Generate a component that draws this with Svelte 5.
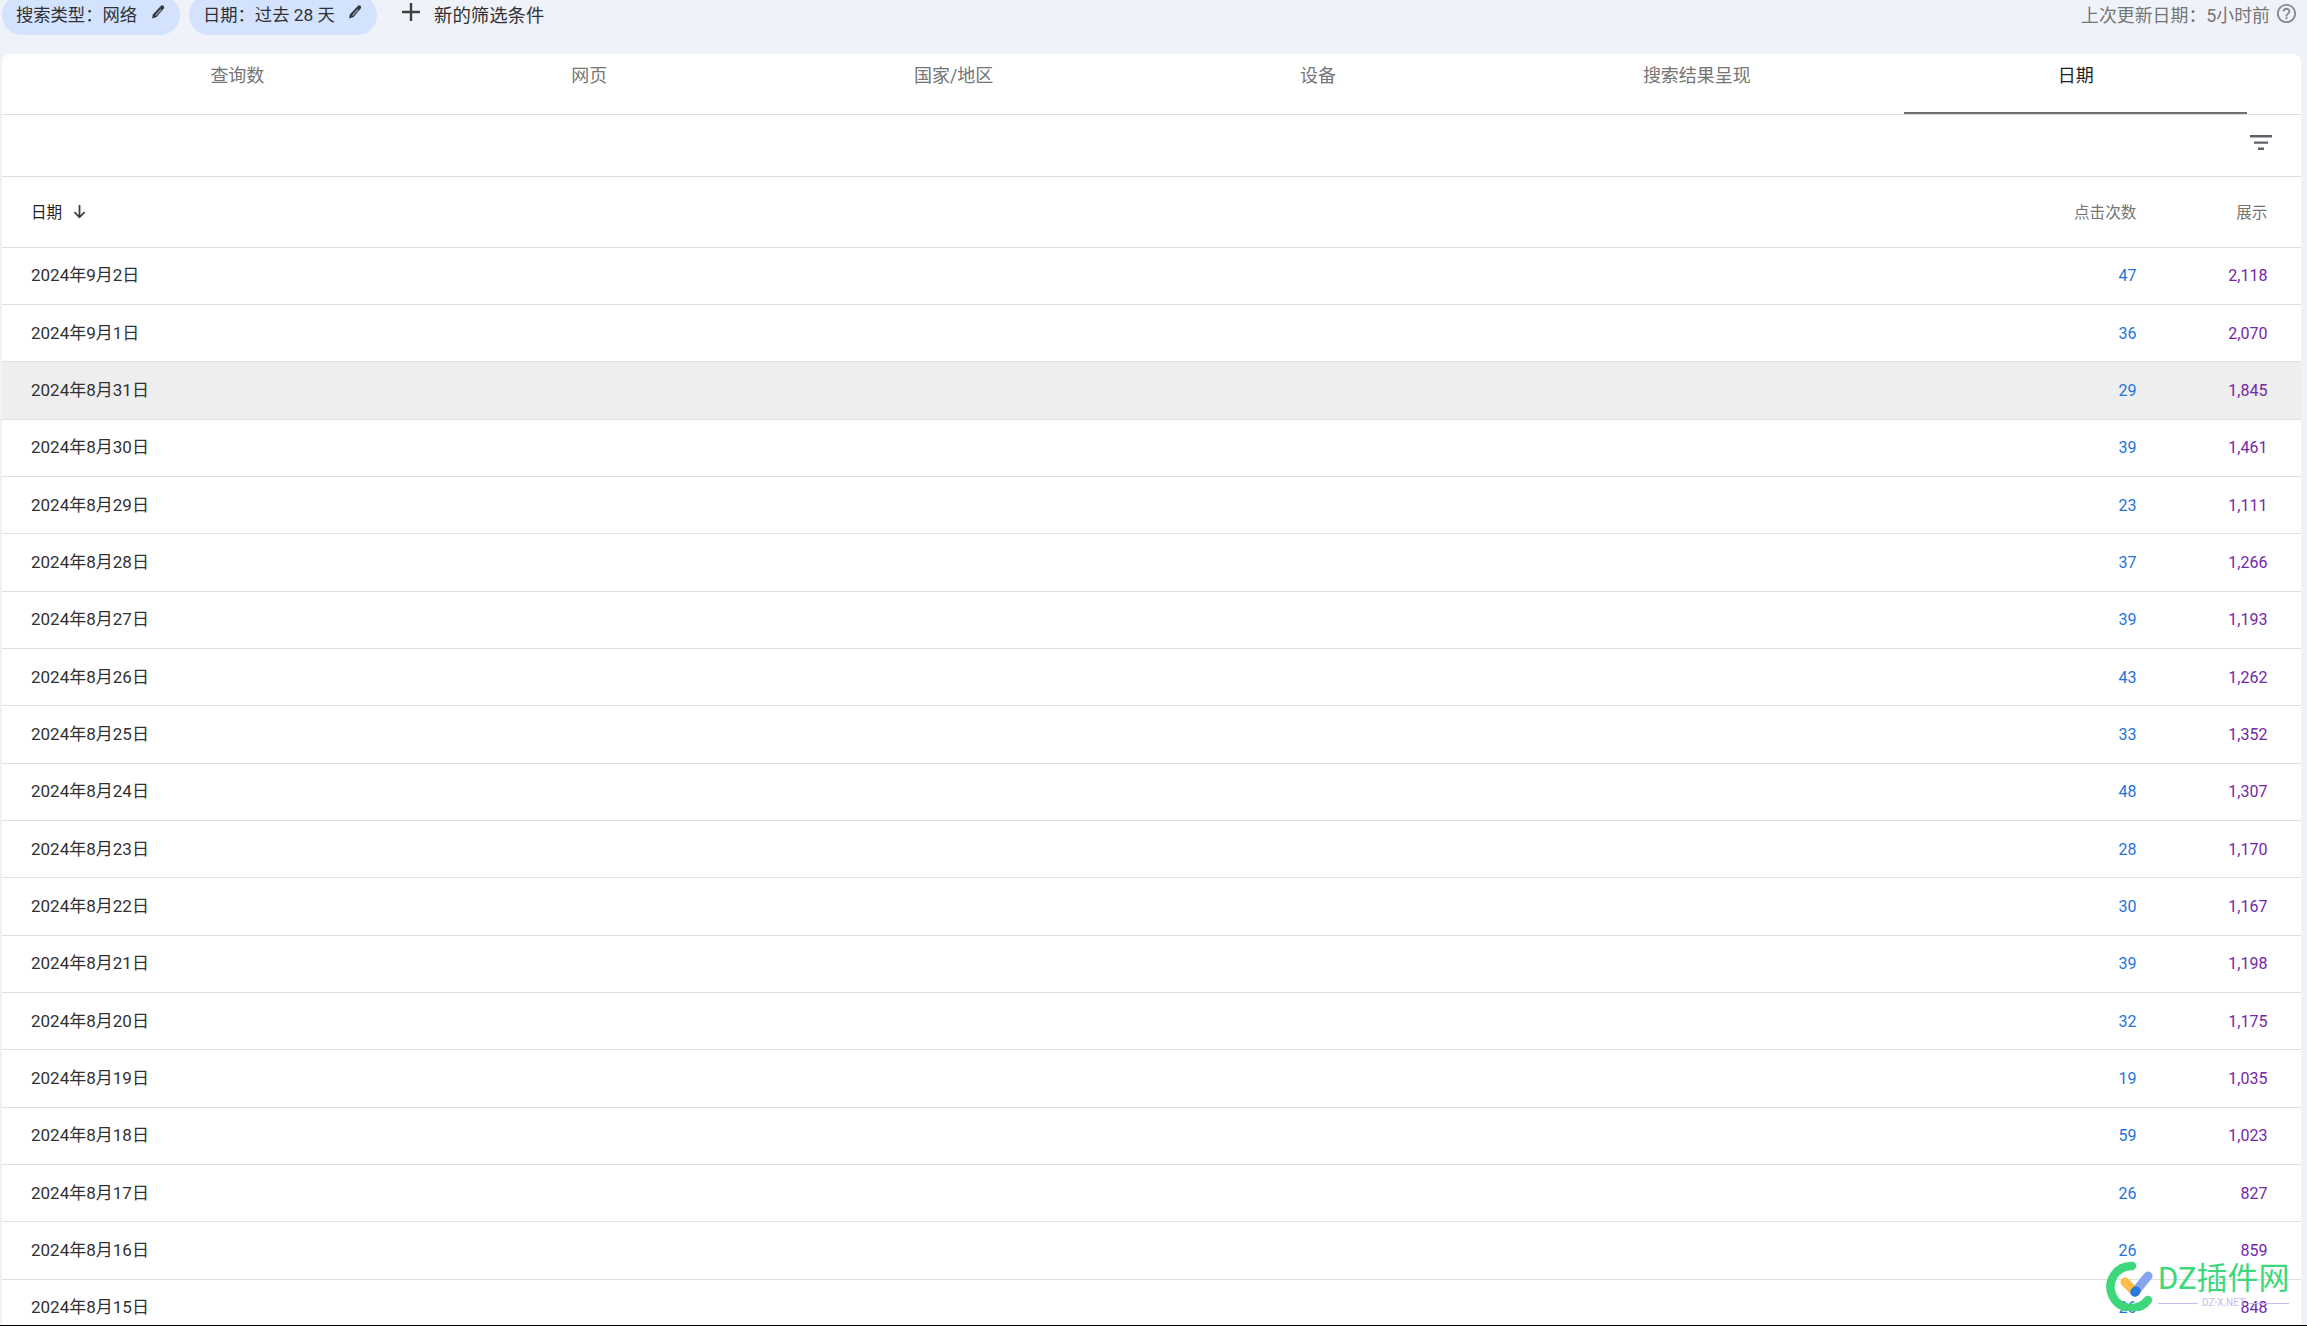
<script lang="ts">
  const tabs = ['查询数', '网页', '国家/地区', '设备', '搜索结果呈现', '日期'];
  const rows = [
    ['2024年9月2日', '47', '2,118'],
    ['2024年9月1日', '36', '2,070'],
    ['2024年8月31日', '29', '1,845'],
    ['2024年8月30日', '39', '1,461'],
    ['2024年8月29日', '23', '1,111'],
    ['2024年8月28日', '37', '1,266'],
    ['2024年8月27日', '39', '1,193'],
    ['2024年8月26日', '43', '1,262'],
    ['2024年8月25日', '33', '1,352'],
    ['2024年8月24日', '48', '1,307'],
    ['2024年8月23日', '28', '1,170'],
    ['2024年8月22日', '30', '1,167'],
    ['2024年8月21日', '39', '1,198'],
    ['2024年8月20日', '32', '1,175'],
    ['2024年8月19日', '19', '1,035'],
    ['2024年8月18日', '59', '1,023'],
    ['2024年8月17日', '26', '827'],
    ['2024年8月16日', '26', '859'],
    ['2024年8月15日', '26', '848'],
  ];
</script>

{#snippet pencil()}
  <svg class="pencil" viewBox="0 0 16 16" width="16" height="16">
    <path d="M10.6 2.2 a2 2 0 0 1 3.2 2.4 L6.6 13 L2.2 14.6 L2.8 10.6 Z" fill="#34373a" />
    <path d="M10.4 5 L11.6 6 L6 12 L5 11.2 Z" fill="#8d97a8" />
  </svg>
{/snippet}

<div class="page">
  <div class="topbar">
    <span class="chip chip-a">搜索类型：网络 {@render pencil()}</span>
    <span class="chip chip-b">日期：过去 28 天 {@render pencil()}</span>
    <span class="add">
      <svg viewBox="0 0 18 18" width="18" height="18"><path d="M7.8 0h2.4v7.8H18v2.4h-7.8V18H7.8v-7.8H0V7.8h7.8z" fill="#3c4043" /></svg>
      新的筛选条件
    </span>
    <span class="updated">
      上次更新日期：5小时前
      <svg viewBox="0 0 24 24" width="23" height="23"><path d="M11 18h2v-2h-2v2zm1-16C6.48 2 2 6.48 2 12s4.48 10 10 10 10-4.48 10-10S17.52 2 12 2zm0 18c-4.41 0-8-3.59-8-8s3.59-8 8-8 8 3.59 8 8-3.59 8-8 8zm0-14c-2.21 0-4 1.79-4 4h2c0-1.1.9-2 2-2s2 .9 2 2c0 2-3 1.75-3 5h2c0-2.25 3-2.5 3-5 0-2.21-1.79-4-4-4z" fill="#8a8a8e" /></svg>
    </span>
  </div>

  <div class="card">
    <div class="tabs">
      {#each tabs as t, i}
        <div class="tab" class:active={i === tabs.length - 1}>{t}</div>
      {/each}
    </div>
    <div class="toolbar">
      <svg viewBox="0 0 22 15" width="22" height="15"><path d="M0 0h22v2.4H0zM4 6.4h14v2.4H4zM8 12.6h6V15H8z" fill="#5f6368" /></svg>
    </div>
    <div class="row head">
      <span class="date-h">日期
        <svg viewBox="0 0 15 15" width="15" height="15"><path d="M7.5 1v12M2.4 8.2 7.5 13.3l5.1-5.1" fill="none" stroke="#3c4043" stroke-width="1.8" /></svg>
      </span>
      <span class="num">点击次数</span>
      <span class="num">展示</span>
    </div>
    {#each rows as r, i}
      <div class="row" class:hover={i === 2}>
        <span class="date">{r[0]}</span>
        <span class="num clicks">{r[1]}</span>
        <span class="num views">{r[2]}</span>
      </div>
    {/each}
  </div>

  <!-- site watermark stamped over the screenshot -->
  <div class="mark">
    <svg class="mark-logo" viewBox="0 0 48 50" width="48" height="50">
      <path d="M26 5 A21 21 0 1 0 42 39" fill="none" stroke="#3ed87a" stroke-width="8.5" stroke-linecap="round" />
      <path d="M29 31 L42 15" stroke="#86a5ee" stroke-width="9" stroke-linecap="round" />
      <path d="M19 21 L29 31" stroke="#fdbd49" stroke-width="9" stroke-linecap="round" />
      <path d="M30 30 L29 31" stroke="#2b7bdd" stroke-width="9.5" stroke-linecap="round" />
    </svg>
    <div class="mark-text">
      <div class="mark-name">DZ插件网</div>
      <div class="mark-sub"><i></i><span>DZ-X.NET</span><i></i></div>
    </div>
  </div>
</div>

<style>
  :global(body) {
    margin: 0;
    background: #eff3f9;
  }
  .page {
    position: relative;
    height: 1326px;
    box-sizing: border-box;
    overflow: hidden;
    border-bottom: 1px solid #000;
    background: #eff3f9;
    font-family: Roboto, 'Noto Sans CJK SC', sans-serif;
    color: #1f1f1f;
  }
  .topbar {
    display: flex;
    align-items: center;
    height: 40px;
    margin-top: -5px;
    margin-bottom: 19px;
    padding: 0 11px 0 2px;
    font-size: 17.3px;
    color: #303134;
  }
  .chip {
    display: flex;
    align-items: center;
    justify-content: space-between;
    box-sizing: border-box;
    height: 40px;
    border-radius: 20px;
    background: #d3e3fd;
    padding: 0 14px 3px 14px;
  }
  .chip-a {
    width: 178px;
  }
  .chip-b {
    width: 188px;
    margin-left: 9px;
  }
  .pencil {
    margin-top: -3px;
  }
  .add {
    display: flex;
    align-items: center;
    gap: 14px;
    margin-left: 25px;
    padding-bottom: 3px;
    font-size: 18.4px;
  }
  .add svg {
    margin-top: -3px;
  }
  .updated {
    display: flex;
    align-items: center;
    gap: 5px;
    margin-left: auto;
    margin-right: -2px;
    padding-bottom: 3px;
    font-size: 17.9px;
    color: #757575;
  }
  .card {
    box-sizing: border-box;
    width: 2299px;
    margin-left: 2px;
    background: #fff;
    border-radius: 8px 8px 0 0;
  }
  .tabs {
    display: flex;
    box-sizing: border-box;
    height: 61px;
    padding: 0 54px 0 55px;
    border-bottom: 1px solid #dedede;
  }
  .tab {
    flex: 1 1 auto;
    box-sizing: border-box;
    height: 60px;
    padding-top: 8px;
    line-height: 28px;
    text-align: center;
    font-size: 18px;
    color: #757575;
  }
  .tab.active {
    color: #1f1f1f;
    border-bottom: 2px solid #6f6f6f;
  }
  .toolbar {
    display: flex;
    justify-content: flex-end;
    box-sizing: border-box;
    height: 62px;
    padding: 20px 29px 0 0;
    border-bottom: 1px solid #dedede;
  }
  .row {
    display: flex;
    align-items: center;
    box-sizing: border-box;
    height: 57.35px;
    padding: 0 33.6px 0 29px;
    border-bottom: 1px solid #e0e0e0;
    font-size: 16px;
  }
  .row.head {
    height: 70.5px;
    padding-bottom: 2px;
    font-size: 15.6px;
    color: #757575;
  }
  .row.hover {
    background: #eeeeee;
  }
  .date-h {
    display: flex;
    align-items: center;
    gap: 10px;
    color: #1f1f1f;
  }
  .date-h svg {
    margin-top: 2px;
  }
  .date {
    font-size: 17px;
    line-height: 20px;
    margin-top: -1px;
    color: #303134;
  }
  .date,
  .date-h {
    flex: 1;
  }
  .num {
    width: 131px;
    text-align: right;
  }
  .clicks {
    color: #1f73dc;
  }
  .views {
    color: #7327a8;
  }
  .mark {
    position: absolute;
    left: 2106px;
    top: 1261px;
    display: flex;
    gap: 4px;
  }
  .mark-logo {
    flex-shrink: 0;
  }
  .mark-text {
    width: 131px;
    color: #3ed87a;
  }
  .mark-name {
    font-size: 31px;
    line-height: 36px;
    white-space: nowrap;
  }
  .mark-sub {
    display: flex;
    align-items: center;
    gap: 4px;
    font-size: 10px;
    line-height: 12px;
    color: #c3bdec;
  }
  .mark-sub i {
    flex: 1;
    height: 1px;
    background: #c3bdec;
  }
</style>
